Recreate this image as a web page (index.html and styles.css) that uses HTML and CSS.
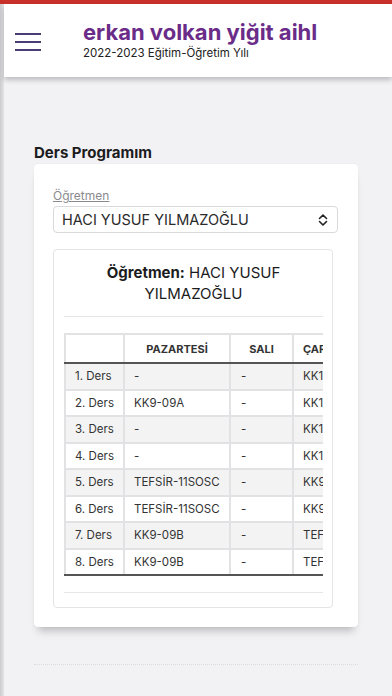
FILE: index.html
```html
<!DOCTYPE html>
<html lang="tr">
<head>
<meta charset="utf-8">
<link rel="stylesheet" href="styles.css">
</head>
<body>
<div class="topbar"></div>
<div class="shell">
  <div class="edge"></div>
  <div class="main">
    <header class="header">
      <div class="burger">
        <span></span><span></span><span></span>
      </div>
      <div class="titles">
        <div class="title">erkan volkan yiğit aihl</div>
        <div class="subtitle">2022-2023 Eğitim-Öğretim Yılı</div>
      </div>
    </header>
    <section class="content">
      <h2 class="section-title">Ders Programım</h2>
      <div class="card">
        <label class="field-label">Öğretmen</label>
        <div class="select">
          <span>HACI YUSUF YILMAZOĞLU</span>
          <svg class="chev" width="12" height="14" viewBox="0 0 12 14"><path d="M2.5 5.5 6 2l3.5 3.5M2.5 8.5 6 12l3.5-3.5" fill="none" stroke="#222" stroke-width="1.6" stroke-linecap="round" stroke-linejoin="round"/></svg>
        </div>
        <div class="panel">
          <h3 class="panel-title"><b>Öğretmen:</b> HACI YUSUF YILMAZOĞLU</h3>
          <div class="rule"></div>
          <div class="scroller">
            <table class="grid">
              <thead>
                <tr><th class="c1"></th><th class="c2">PAZARTESİ</th><th class="c3">SALI</th><th class="c4">ÇARŞAMBA</th></tr>
              </thead>
              <tbody>
                <tr><td>1. Ders</td><td>-</td><td>-</td><td>KK10-10A</td></tr>
                <tr><td>2. Ders</td><td>KK9-09A</td><td>-</td><td>KK10-10A</td></tr>
                <tr><td>3. Ders</td><td>-</td><td>-</td><td>KK10-10B</td></tr>
                <tr><td>4. Ders</td><td>-</td><td>-</td><td>KK10-10B</td></tr>
                <tr><td>5. Ders</td><td>TEFSİR-11SOSC</td><td>-</td><td>KK9-09A</td></tr>
                <tr><td>6. Ders</td><td>TEFSİR-11SOSC</td><td>-</td><td>KK9-09A</td></tr>
                <tr><td>7. Ders</td><td>KK9-09B</td><td>-</td><td>TEFSİR-11SOSC</td></tr>
                <tr><td>8. Ders</td><td>KK9-09B</td><td>-</td><td>TEFSİR-11SOSC</td></tr>
              </tbody>
            </table>
          </div>
          <div class="rule rule-bottom"></div>
        </div>
      </div>
      <div class="dotted"></div>
    </section>
  </div>
</div>
</body>
</html>
```
FILE: styles.css
```css
* { box-sizing: border-box; }
html, body { margin: 0; padding: 0; }
body {
  background: #f2f1f4;
  font-family: Inter, "Noto Sans", "Liberation Sans", sans-serif;
  color: #1c1c1e;
  width: 392px;
  height: 696px;
  overflow: hidden;
}
.topbar { height: 4px; background: #c8302a; }
.shell { display: flex; height: 692px; }
.edge {
  width: 4px;
  flex: none;
  background: linear-gradient(to right, #cbcbcd, #e4e3e6);
}
.main { flex: 1; min-width: 0; }
.header {
  height: 73px;
  background: #fff;
  box-shadow: 0 3px 5px rgba(0,0,0,0.22);
  display: flex;
  align-items: flex-start;
  position: relative;
  z-index: 1;
}
.burger {
  margin: 29px 0 0 11px;
  width: 26px;
  display: flex;
  flex-direction: column;
  gap: 6.5px;
}
.burger span { display: block; height: 1.6px; background: #4b3c72; }
.titles { margin: 15px 0 0 42px; }
.title {
  font-size: 22px;
  font-weight: 700;
  color: #6a2c88;
  letter-spacing: 0;
  line-height: 26px;
}
.subtitle {
  font-size: 11.5px;
  color: #222;
  line-height: 16px;
  margin-top: 0;
}
.content { padding: 0 34px 0 30px; }
.section-title {
  margin: 65px 0 0;
  font-size: 15px;
  font-weight: 700;
  line-height: 22px;
  color: #1c1c1e;
}
.card {
  background: #fff;
  border-radius: 4px;
  padding: 24px 20px 19px 19px;
  box-shadow: 0 8px 8px -4px rgba(0,0,0,0.22), 0 0 1px rgba(0,0,0,0.12);
}
.field-label {
  display: block;
  font-size: 12px;
  color: #8a8a8e;
  text-decoration: underline;
  line-height: 15px;
  margin-bottom: 3px;
}
.select {
  height: 27px;
  border: 1px solid #d9d9dc;
  border-radius: 4px;
  display: flex;
  align-items: center;
  justify-content: space-between;
  padding: 0 8px 0 8px;
  font-size: 14.5px;
  color: #2a2a2a;
}
.panel {
  margin-top: 16px;
  margin-right: 5px;
  border: 1px solid #e4e4e6;
  border-radius: 4px;
  padding: 0 9px 14px 10px;
}
.panel-title {
  margin: 12px 18px 0;
  text-align: center;
  font-size: 15px;
  font-weight: 400;
  line-height: 21px;
  color: #1c1c1e;
}
.panel-title b { font-weight: 700; }
.rule { height: 1px; background: #e6e6e8; margin-top: 12px; }
.rule-bottom { margin-top: 16px; }
.scroller { overflow: hidden; margin-top: 16px; }
.grid {
  border-collapse: collapse;
  font-size: 11.5px;
  white-space: nowrap;
  color: #333;
}
.grid th, .grid td {
  border: 2px solid #e2e2e4;
  padding: 0 9px;
  text-align: left;
  height: 26.5px;
}
.grid th {
  height: 29px;
  font-weight: 700;
  font-size: 11px;
  text-align: center;
  border-top: 2px solid #e2e2e4;
  border-bottom: 2px solid #555;
  color: #333;
}
.grid .c1 { width: 59px; min-width: 59px; }
.grid .c2 { width: 106px; min-width: 106px; }
.grid .c3 { width: 63px; min-width: 63px; }
.grid .c4 { width: 100px; min-width: 100px; text-align: left; }
.grid tbody tr:nth-child(odd) td { background: #f3f3f4; }
.grid tbody tr:last-child td { border-bottom: 2px solid #555; }
.grid td:nth-child(3) { padding-left: 10px; }
.dotted {
  margin-top: 37px;
  border-top: 1px dotted #dcdce0;
}
```
